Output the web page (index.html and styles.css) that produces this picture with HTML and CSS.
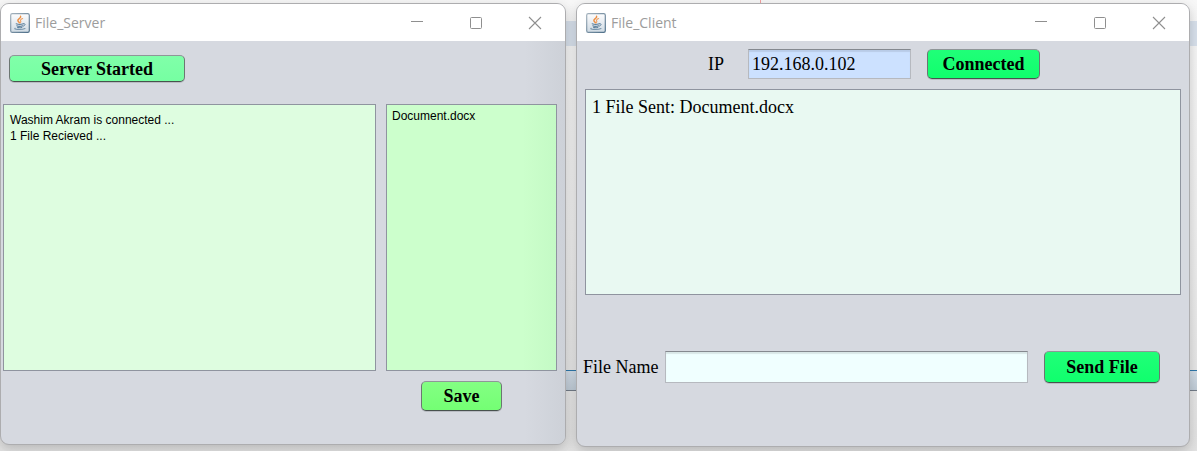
FILE: index.html
```html
<!DOCTYPE html>
<html lang="en">
<head>
<meta charset="utf-8">
<title>File Transfer</title>
<link rel="stylesheet" href="styles.css">
</head>
<body>
<svg class="defs" aria-hidden="true">
  <defs>
    <linearGradient id="tile" x1="0" y1="0" x2="0" y2="1">
      <stop offset="0" stop-color="#fdfdfe"/>
      <stop offset="1" stop-color="#cfdae3"/>
    </linearGradient>
    <linearGradient id="edge" x1="0" y1="0" x2="1" y2="1">
      <stop offset="0" stop-color="#a4b2bd"/>
      <stop offset="1" stop-color="#4f708a"/>
    </linearGradient>
    <symbol id="java" viewBox="0 0 20 20">
      <rect x=".7" y=".7" width="18.6" height="18.6" rx="1.6" fill="url(#tile)" stroke="url(#edge)" stroke-width="1.2"/>
      <g fill="none" stroke-linecap="round">
        <path d="M10.6 3.2c.8 2-3.3 2.7-2.7 4.6.2.7 1.4 1.2 1.5 2" stroke="#ee8f43" stroke-width="1.5"/>
        <path d="M12.6 5.6c-1.5.6-2.6 1.3-2 2.3.5.8.5 1.2-.3 1.9" stroke="#f0a062" stroke-width="1.1"/>
        <path d="M6.2 10.8c1.8.7 5.3.6 7 0M6.8 12.8c1.6.6 4.2.6 5.7 0M7.600 14.400c1.300.4 3 .4 4.200 0" stroke="#5f829e" stroke-width="1.1"/>
        <path d="M13.4 10.7c2.600-.6 2.100 2-.3 2.500" stroke="#5f829e"/>
        <path d="M5.200 15.300c-2.200.8 5.500 2 9.800.3" stroke="#7895ac" stroke-width="1.1"/>
      </g>
    </symbol>
    <symbol id="minimize" viewBox="0 0 14 14"><path d="M1 5.500h12" stroke="#8f8f8f" fill="none"/></symbol>
    <symbol id="maximize" viewBox="0 0 14 14"><rect x="1.500" y="1.500" width="11" height="11" rx="1" stroke="#8f8f8f" fill="none"/></symbol>
    <symbol id="close" viewBox="0 0 14 14"><path d="M1 1l12 12M13 1L1 13" stroke="#8f8f8f" stroke-width="1.1" fill="none"/></symbol>
  </defs>
</svg>
<main class="desktop">
  <section class="window server">
    <header class="titlebar">
      <svg class="app-icon"><use href="#java"/></svg>
      <h1 class="title">File_Server</h1>
      <div class="controls">
        <button class="control" aria-label="Minimize"><svg><use href="#minimize"/></svg></button>
        <button class="control" aria-label="Maximize"><svg><use href="#maximize"/></svg></button>
        <button class="control" aria-label="Close"><svg><use href="#close"/></svg></button>
      </div>
    </header>
    <div class="server-body">
      <div class="server-top"><button class="button start">Server Started</button></div>
      <div class="panes">
        <textarea class="log server-log" aria-label="Server log" readonly>Washim Akram is connected ...
1 File Recieved ...</textarea>
        <ul class="files" aria-label="Received files"><li>Document.docx</li></ul>
      </div>
      <div class="server-bottom"><button class="button save">Save</button></div>
    </div>
  </section>
  <section class="window client">
    <header class="titlebar">
      <svg class="app-icon"><use href="#java"/></svg>
      <h1 class="title">File_Client</h1>
      <div class="controls">
        <button class="control" aria-label="Minimize"><svg><use href="#minimize"/></svg></button>
        <button class="control" aria-label="Maximize"><svg><use href="#maximize"/></svg></button>
        <button class="control" aria-label="Close"><svg><use href="#close"/></svg></button>
      </div>
    </header>
    <div class="client-body">
      <div class="connect-row">
        <label for="ip">IP</label>
        <input class="field ip" id="ip" type="text" value="192.168.0.102">
        <button class="button connect">Connected</button>
      </div>
      <textarea class="log client-log" aria-label="Client log" readonly>1 File Sent: Document.docx</textarea>
      <div class="send-row">
        <label for="file">File Name</label>
        <input class="field file" id="file" type="text">
        <button class="button send">Send File</button>
      </div>
    </div>
  </section>
</main>
</body>
</html>
```
FILE: styles.css
```css
* { box-sizing: border-box; }

body {
  margin: 0;
  font-family: "Liberation Serif", "Times New Roman", serif;
  font-size: 18px;
  color: #000;
}

.defs { position: absolute; width: 0; height: 0; }

.desktop {
  display: grid;
  grid-template-columns: 566fr 614fr;
  gap: 10px;
  min-height: 100vh;
  padding: 3px 7px 4px 0;
  background:
    linear-gradient(90deg, transparent 760px, #f2a0a0 760px, #f2a0a0 761px, transparent 761px) 0 0 / 100% 3px no-repeat,
    linear-gradient(#d8e1ec, #d8e1ec) 0 21px / 100% 25px no-repeat,
    linear-gradient(#2f78ab 1px, #d3dde7 1px, #c0ccd7 20px, #737c88 20px) 0 370px / 100% 21px no-repeat,
    linear-gradient(#f7f7f7, #efefef 50%, #e2e2e2);
}

.window {
  display: flex;
  flex-direction: column;
  border: 1px solid #adadaf;
  border-radius: 9px;
  overflow: hidden;
  background: #d6d9e0;
  box-shadow: 0 4px 12px #00000030;
}

.server { margin-bottom: 2px; }

.titlebar {
  display: flex;
  align-items: center;
  height: 37px;
  padding: 0 23px 0 9px;
  background: #fff;
}

.app-icon { width: 20px; height: 20px; }

.title {
  margin: 0 0 0 5px;
  font: 14px/20px "Open Sans", "Noto Sans", sans-serif;
  color: #9c9c9c;
}

.controls { display: flex; gap: 45px; margin-left: auto; }

.control {
  display: grid;
  padding: 0;
  border: 0;
  background: none;
}

.control svg { width: 14px; height: 14px; }

.button {
  padding: 0;
  border: 1px solid;
  border-color: #8f9698 #6c7672 #48524e;
  border-radius: 5px;
  box-shadow: 0 1px 0 #b9bcc3;
  font: bold 18px/20px "Liberation Serif", "Times New Roman", serif;
  color: #000;
}

.log {
  display: block;
  margin: 0;
  border: 1px solid #8f949f;
  border-radius: 0;
  outline: 0;
  resize: none;
  overflow: hidden;
  color: #000;
}

.field {
  min-width: 0;
  padding: 0 3px;
  border: 1px solid #b6b9bf;
  border-top-color: #85898f;
  outline: 0;
  box-shadow: inset 0 2px 1px #00000018;
  font: inherit;
}

.server-body {
  display: flex;
  flex: 1;
  flex-direction: column;
  padding: 14px 8px 33px 2px;
  background: linear-gradient(90deg, transparent calc(100% - 40px), #cdd1d8);
}

.server-top { padding: 0 6px 22px; }

.start { width: 176px; height: 27px; background: linear-gradient(#80ffa9, #76ffa2); }

.panes {
  display: grid;
  flex: 1;
  grid-template-columns: 373fr 171fr;
  gap: 10px;
  font: 12px/16px "Liberation Sans", Arial, sans-serif;
}

.server-log {
  width: 100%;
  height: 100%;
  padding: 7px 6px;
  background: #defde0;
  font: inherit;
}

.files {
  margin: 0;
  padding: 3px 5px;
  border: 1px solid #8f949f;
  background: linear-gradient(90deg, #ccffcc 80%, #c4fac5);
  list-style: none;
}

.server-bottom {
  display: flex;
  justify-content: flex-end;
  padding: 10px 55px 0 0;
}

.save { width: 81px; height: 30px; background: linear-gradient(#83ff83, #74ff74); }

.client-body {
  display: flex;
  flex: 1;
  flex-direction: column;
  padding: 8px 8px 63px;
}

.connect-row {
  display: flex;
  align-items: center;
  justify-content: center;
  padding-right: 18px;
}

.ip { width: 163px; height: 30px; margin: 0 16px 0 24px; background: #cce1ff; }

.connect { width: 113px; height: 30px; background: linear-gradient(#20ff78, #10ff6d); }

.client-log {
  flex: 1;
  width: 100%;
  margin: 10px 0 56px;
  padding: 7px 6px;
  background: #e9f9f2;
  font: 18px/20px "Liberation Serif", "Times New Roman", serif;
}

.send-row {
  display: flex;
  align-items: center;
  margin: 0 21px 0 -2px;
}

.file { flex: 1; height: 32px; margin: 0 16px 0 7px; background: #f0ffff; }

.send { width: 116px; height: 32px; background: linear-gradient(#20ff78, #10ff6d); }
```
